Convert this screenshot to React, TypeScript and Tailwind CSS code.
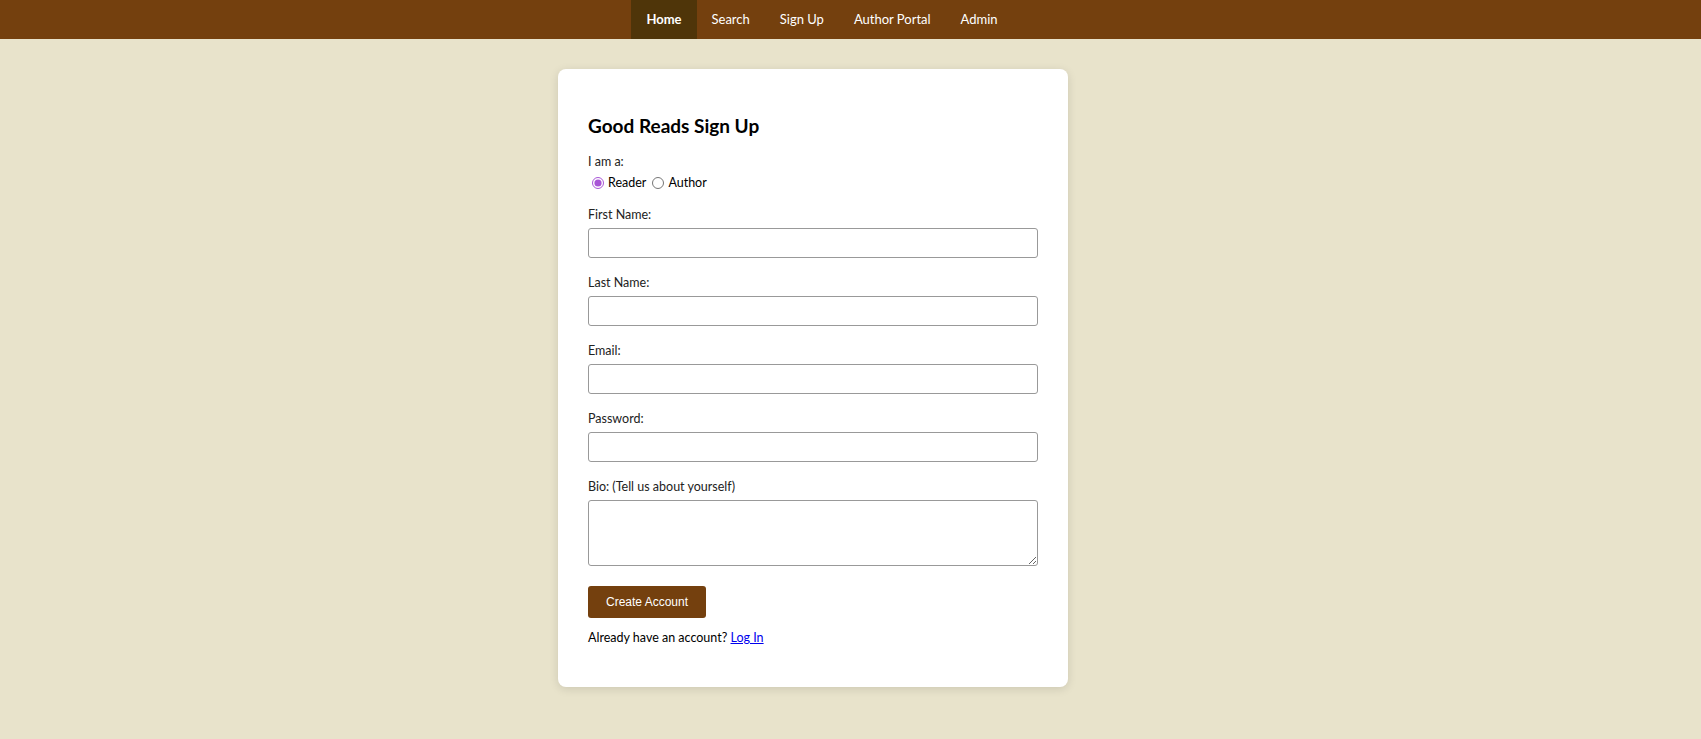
import { useState } from "react";

const navLinks = ["Home", "Search", "Sign Up", "Author Portal", "Admin"];

function Field({ label, type = "text" }: { label: string; type?: string }) {
  return (
    <div className="mb-[16px]">
      <label className="block text-[12.5px] leading-[18px] text-[#222]">{label}</label>
      <input
        type={type}
        className="mt-[4px] block h-[30px] w-full rounded-[3px] border border-[#999] bg-white px-2 text-[13px] focus:outline-none"
      />
    </div>
  );
}

export default function App() {
  const [role, setRole] = useState("reader");

  return (
    <div className="min-h-screen bg-[#e8e3cb] font-['Lato',sans-serif]">
      {/* Navbar */}
      <nav className="flex h-[39px] justify-center bg-[#74400e] pr-[57px]">
        {navLinks.map((link, i) => (
          <a
            key={link}
            href="#"
            className={
              i === 0
                ? "flex items-center bg-[#4f3509] px-[15px] text-[13px] font-bold text-white"
                : "flex items-center px-[15px] text-[13px] text-white"
            }
          >
            {link}
          </a>
        ))}
      </nav>

      <div className="flex justify-center pr-[75px] pt-[30px] pb-[52px]">
        <div className="w-[510px] rounded-[8px] bg-white px-[30px] pt-[44px] pb-[40px] shadow-[0_2px_10px_rgba(0,0,0,0.12)]">
          <h2 className="text-[19px] font-bold leading-[26px] text-black">Good Reads Sign Up</h2>

          <div className="mt-[14px] text-[12.5px] leading-[18px] text-[#222]">I am a:</div>
          <div className="mt-[3px] flex items-center text-[12.5px] leading-[18px] text-black">
            <label className="flex items-center">
              <input
                type="radio"
                name="role"
                checked={role === "reader"}
                onChange={() => setRole("reader")}
                className="mx-[4px] h-[12px] w-[12px] accent-[#a855d6]"
              />
              Reader
            </label>
            <label className="ml-[2px] flex items-center">
              <input
                type="radio"
                name="role"
                checked={role === "author"}
                onChange={() => setRole("author")}
                className="mx-[4px] h-[12px] w-[12px] accent-[#a855d6]"
              />
              Author
            </label>
          </div>

          <div className="mt-[14px]">
            <Field label="First Name:" />
            <Field label="Last Name:" />
            <Field label="Email:" type="email" />
            <Field label="Password:" type="password" />

            <div>
              <label className="block text-[12.5px] leading-[18px] text-[#222]">
                Bio: (Tell us about yourself)
              </label>
              <textarea className="mt-[4px] block h-[66px] w-full rounded-[3px] border border-[#999] bg-white px-2 text-[13px] focus:outline-none" />
            </div>

            <button className="mt-[20px] h-[32px] rounded-[3px] bg-[#74400e] px-[18px] font-['Liberation_Sans',sans-serif] text-[12px] text-white">
              Create Account
            </button>

            <p className="mt-[11px] text-[12.5px] leading-[18px] text-black">
              Already have an account?{" "}
              <a href="#" className="text-[#0000ee] underline">
                Log In
              </a>
            </p>
          </div>
        </div>
      </div>
    </div>
  );
}
